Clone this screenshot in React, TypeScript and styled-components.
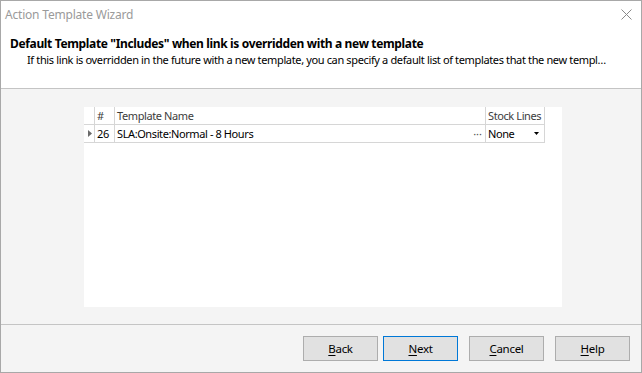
import React from "react";
import styled, { createGlobalStyle } from "styled-components";

const FONT = `"Noto Sans", "Segoe UI", sans-serif`;

const Global = createGlobalStyle`
  html, body { margin: 0; padding: 0; background: #ffffff; }
  body { font-family: ${FONT}; font-size: 11px; color: #000; }
  * { box-sizing: border-box; }
`;

const Window = styled.div`
  width: 642px;
  height: 373px;
  border: 1px solid #a8a8a8;
  background: #f4f4f4;
  display: flex;
  flex-direction: column;
  overflow: hidden;
`;

const Top = styled.div`
  background: #ffffff;
  height: 88px;
  border-bottom: 1px solid #c4c4c4;
  display: flex;
  flex-direction: column;
`;

const TitleBar = styled.div`
  height: 28px;
  display: flex;
  align-items: center;
  justify-content: space-between;
  padding: 0 9px 2px 4px;
`;

const Title = styled.span`
  color: #9a9a9a;
  font-size: 12px;
  letter-spacing: -0.2px;
`;

const CloseIcon = styled.svg`
  width: 11px;
  height: 11px;
  margin-top: 1px;
`;

const Heading = styled.div`
  font-weight: bold;
  font-size: 12px;
  margin: 7px 0 0 9px;
  letter-spacing: -0.35px;
  line-height: 16px;
`;

const SubText = styled.div`
  margin: 0 0 0 26px;
  width: 582px;
  white-space: nowrap;
  overflow: hidden;
  text-overflow: ellipsis;
  line-height: 16px;
  letter-spacing: -0.36px;
`;

const Content = styled.div`
  flex: 1;
  padding: 18px 0 0 83px;
  border-bottom: 1px solid #c4c4c4;
`;

const GridPanel = styled.div`
  width: 478px;
  height: 200px;
  background: #ffffff;
`;

const GridRow = styled.div`
  display: grid;
  grid-template-columns: 11px 20px 371px 59px;
  height: 18px;
`;

const Cell = styled.div<{ $head?: boolean }>`
  border-right: 1px solid #d6d6d6;
  border-bottom: 1px solid #d6d6d6;
  padding: 0 2px;
  display: flex;
  align-items: center;
  justify-content: space-between;
  white-space: nowrap;
  overflow: hidden;
  color: ${(p) => (p.$head ? "#3c3c3c" : "#000")};
  letter-spacing: -0.4px;
  line-height: 17px;
`;

const Indicator = styled.div`
  border-right: 1px solid #d6d6d6;
  border-bottom: 1px solid #d6d6d6;
  display: flex;
  align-items: center;
  padding-left: 4px;
`;

const Dots = styled.span`
  color: #555;
  font-size: 11px;
  letter-spacing: 0;
  margin-right: 1px;
`;

const Footer = styled.div`
  height: 47px;
  display: flex;
  justify-content: flex-end;
  align-items: flex-start;
  padding: 11px 11px 0 0;
`;

const Button = styled.button<{ $default?: boolean; $gap: number }>`
  width: 75px;
  height: 25px;
  margin-left: ${(p) => p.$gap}px;
  background: #e1e1e1;
  border: 1px solid ${(p) => (p.$default ? "#0078d7" : "#adadad")};
  font-family: ${FONT};
  font-size: 11.5px;
  letter-spacing: -0.3px;
  color: #000;
  padding: 0;
  display: flex;
  align-items: center;
  justify-content: center;
  & u { text-decoration: underline; text-underline-offset: 2px; }
`;

export default function App() {
  return (
    <>
      <Global />
      <Window>
        <Top>
          <TitleBar>
            <Title>Action Template Wizard</Title>
            <CloseIcon viewBox="0 0 11 11">
              <path d="M0.5 0.5 L10.5 10.5 M10.5 0.5 L0.5 10.5" stroke="#8a8a8a" strokeWidth="1" fill="none" />
            </CloseIcon>
          </TitleBar>
          <Heading>Default Template "Includes" when link is overridden with a new template</Heading>
          <SubText>
            If this link is overridden in the future with a new template, you can specify a default list of templates that the new template should include.
          </SubText>
        </Top>
        <Content>
          <GridPanel>
            <GridRow>
              <Indicator />
              <Cell $head>#</Cell>
              <Cell $head>Template Name</Cell>
              <Cell $head>Stock Lines</Cell>
            </GridRow>
            <GridRow>
              <Indicator>
                <svg width="4" height="7" viewBox="0 0 4 7">
                  <path d="M0 0 L4 3.5 L0 7 Z" fill="#6a6a6a" />
                </svg>
              </Indicator>
              <Cell>26</Cell>
              <Cell>
                <span>SLA:Onsite:Normal - 8 Hours</span>
                <Dots>···</Dots>
              </Cell>
              <Cell>
                <span>None</span>
                <svg width="5" height="3" viewBox="0 0 5 3" style={{ marginRight: 3 }}>
                  <path d="M0 0 L5 0 L2.5 3 Z" fill="#000" />
                </svg>
              </Cell>
            </GridRow>
          </GridPanel>
        </Content>
        <Footer>
          <Button $gap={0}><span><u>B</u>ack</span></Button>
          <Button $gap={5} $default><span><u>N</u>ext</span></Button>
          <Button $gap={11}><span><u>C</u>ancel</span></Button>
          <Button $gap={11}><span><u>H</u>elp</span></Button>
        </Footer>
      </Window>
    </>
  );
}
